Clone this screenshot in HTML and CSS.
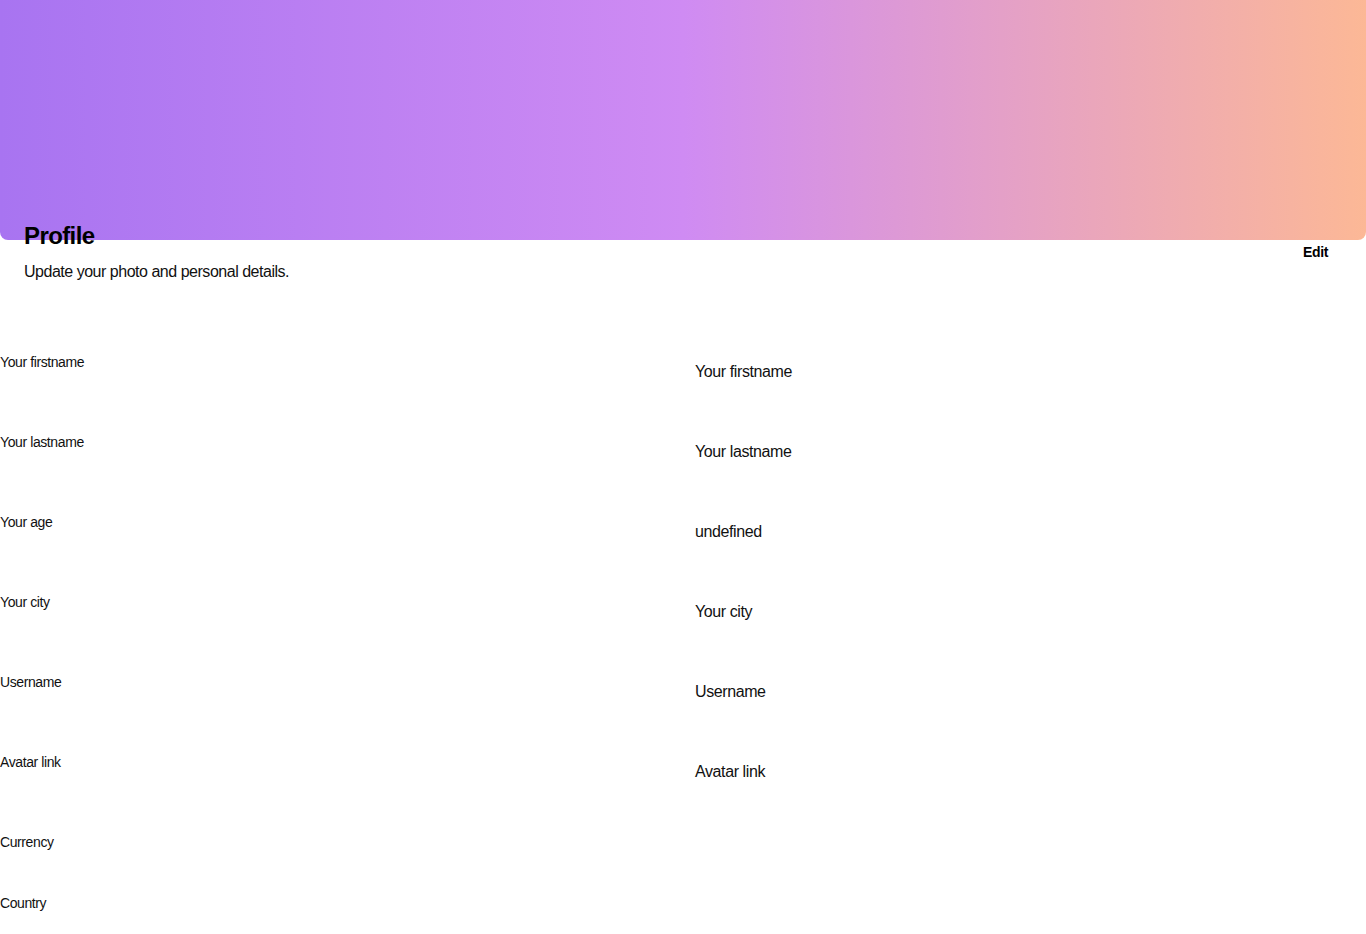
FILE: index.html
```html
<!DOCTYPE html>
<html>
<head>
<meta charset="utf-8">
<link rel="stylesheet" href="styles.css">
</head>
<body>
<div class="banner"></div>
<div class="header">
  <div class="titles">
    <h1 class="title">Profile</h1>
    <p class="subtitle">Update your photo and personal details.</p>
  </div>
  <button class="edit">Edit</button>
</div>
<div class="form">
  <div class="row"><div class="label">Your firstname</div><div class="value">Your firstname</div></div>
  <div class="row"><div class="label">Your lastname</div><div class="value">Your lastname</div></div>
  <div class="row"><div class="label">Your age</div><div class="value">undefined</div></div>
  <div class="row"><div class="label">Your city</div><div class="value">Your city</div></div>
  <div class="row"><div class="label">Username</div><div class="value">Username</div></div>
  <div class="row"><div class="label">Avatar link</div><div class="value">Avatar link</div></div>
  <div class="row short"><div class="label">Currency</div><div class="value"></div></div>
  <div class="row short"><div class="label">Country</div><div class="value"></div></div>
</div>
</body>
</html>
```
FILE: styles.css
```css
* { box-sizing: border-box; }
html, body { margin: 0; padding: 0; background: #fff; }
body {
  font-family: "Liberation Sans", Arial, sans-serif;
  letter-spacing: -0.025em;
  color: #111;
  width: 1366px;
  overflow: hidden;
}
.banner {
  height: 240px;
  width: 100%;
  border-radius: 0 0 8px 8px;
  background: linear-gradient(to right, #a874f1 0%, #cf8bf3 50%, #fcb896 100%);
}
.header {
  display: flex;
  justify-content: space-between;
  align-items: center;
  padding: 0 24px;
  margin-top: -18px;
}
.title {
  margin: 0;
  font-size: 24px;
  line-height: 28px;
  font-weight: 700;
  color: #000;
  letter-spacing: -0.025em;
}
.subtitle {
  margin: 13px 0 0;
  font-size: 16px;
  line-height: 18px;
  letter-spacing: -0.03em;
  color: #111;
}
.edit {
  background: none;
  border: none;
  padding: 8px 14px;
  font-family: inherit;
  font-size: 14px;
  line-height: 16px;
  font-weight: 700;
  letter-spacing: -0.025em;
  color: #000;
  cursor: pointer;
}
.form {
  margin-top: 65px;
}
.row {
  display: grid;
  grid-template-columns: 695px 1fr;
  height: 80px;
}
.row.short { height: 61px; }
.label {
  padding-top: 8px;
  font-size: 14px;
  line-height: 16px;
  color: #111;
}
.value {
  padding-top: 17px;
  font-size: 16px;
  line-height: 18px;
  color: #111;
}
```
